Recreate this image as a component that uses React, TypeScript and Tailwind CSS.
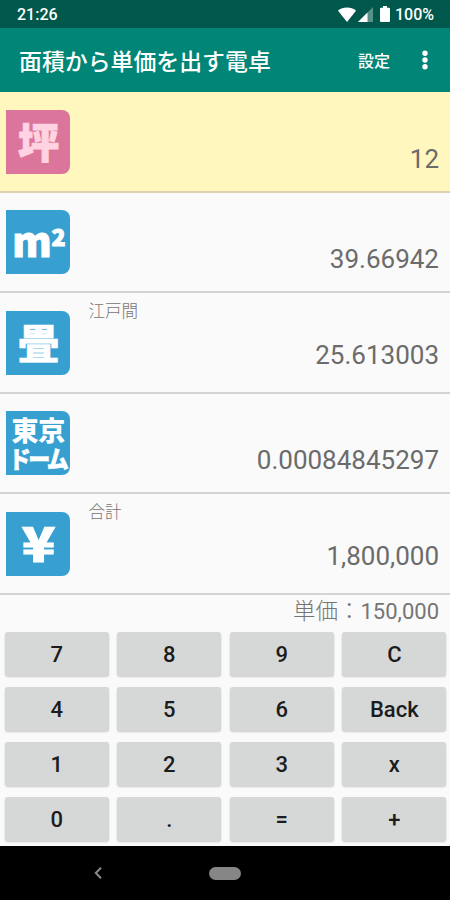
import type { ReactNode } from 'react';
import clsx from 'clsx';

type Row = {
  id: string;
  icon: ReactNode;
  value: string;
  label?: string;
  active?: boolean;
  valueClass: string;
};

const rows: Row[] = [
  {
    id: 'tsubo',
    icon: <span className="pb-[3px] text-[41px] leading-[60px] [-webkit-text-stroke:1px]">坪</span>,
    value: '12',
    active: true,
    valueClass: 'pt-[52px]',
  },
  {
    id: 'm2',
    icon: (
      <span className="flex items-start pb-[5px] pl-[1px] [-webkit-text-stroke:1px]">
        <span className="text-[40px] leading-[58px]">m</span>
        <span className="text-[23px] leading-[50px]">2</span>
      </span>
    ),
    value: '39.66942',
    valueClass: 'pt-[51px]',
  },
  {
    id: 'jo',
    icon: <span className="pb-[3px] text-[41px] leading-[60px] [-webkit-text-stroke:0.5px]">畳</span>,
    value: '25.613003',
    label: '江戸間',
    valueClass: 'pt-[47px]',
  },
  {
    id: 'dome',
    icon: (
      <span className="flex flex-col items-center leading-[27px] whitespace-nowrap">
        <span className="pb-px text-[27px]">東京</span>
        <span className="scale-x-92 text-[24px] tracking-[-1.5px] [font-feature-settings:'palt'] [-webkit-text-stroke:0.5px]">
          ドーム
        </span>
      </span>
    ),
    value: '0.00084845297',
    valueClass: 'pt-[51px]',
  },
  {
    id: 'yen',
    icon: <span className="scale-x-115 pb-[5px] text-[48px] leading-[60px] [-webkit-text-stroke:1px]">¥</span>,
    value: '1,800,000',
    label: '合計',
    valueClass: 'pt-[47px]',
  },
];

const keys = ['7', '8', '9', 'C', '4', '5', '6', 'Back', '1', '2', '3', 'x', '0', '.', '=', '+'];

const StatusBar = () => (
  <div className="flex h-7 items-center bg-[#00574b] pr-4 pl-[17px] text-base font-medium text-white">
    <span className="flex-1 pt-[2px]">21:26</span>
    <svg className="h-[15px] w-[18px]" viewBox="0 0 18 15" fill="currentColor">
      <path d="M0 3.7C2.4 1.8 5.4.6 9 .6s6.600 1.200 9 3.100L9 15z" />
    </svg>
    <svg className="ml-[2px] h-[15px] w-[15px]" viewBox="0 0 15 15" fill="currentColor">
      <path d="M0 15 15 0v15z" opacity=".35" />
      <path d="M0 15 9.500 5.500V15z" />
    </svg>
    <svg className="ml-[7px] h-[16px] w-[10px]" viewBox="0 0 10 16" fill="currentColor">
      <path d="M3 0h4v1.700h2q1 0 1 1V15q0 1-1 1H1q-1 0-1-1V2.700q0-1 1-1h2z" />
    </svg>
    <span className="pt-[2px] pl-[5px]">100%</span>
  </div>
);

const AppBar = () => (
  <div className="flex h-16 items-center bg-[#008577] font-['Noto_Sans_CJK_JP',sans-serif] font-medium text-white">
    <h1 className="flex-1 pt-px pl-[19px] text-[22.9px] whitespace-nowrap">面積から単価を出す電卓</h1>
    <span className="text-base">設定</span>
    <svg className="mr-[22px] ml-8 h-5 w-[6px]" viewBox="0 0 6 20" fill="currentColor">
      <circle cx="3" cy="3.300" r="2.700" />
      <circle cx="3" cy="10" r="2.700" />
      <circle cx="3" cy="16.700" r="2.700" />
    </svg>
  </div>
);

const UnitRow = ({ row }: { row: Row }) => (
  <div
    className={clsx(
      'flex h-[100.6px] border-b-2',
      row.active ? 'border-[#d9d3b4] bg-[#fff7bd]' : 'border-[#d3d3d3]',
    )}
  >
    <div
      className={clsx(
        "mt-[17.6px] ml-[6.4px] flex h-16 w-16 items-center justify-center rounded-r-[8px] font-['Noto_Sans_CJK_JP',sans-serif] font-black",
        row.active ? 'bg-[#dc759b] text-[#ffd3e2]' : 'bg-[#37a0d0] text-white',
      )}
    >
      {row.icon}
    </div>
    <div className="w-20 pt-[7px] pl-[18px] text-[16.5px] leading-6 font-light text-[#757575]">{row.label}</div>
    <div className={clsx('flex-1 pr-[11px] text-right text-[26px] leading-[30px] text-[#6b6b6b]', row.valueClass)}>
      {row.value}
    </div>
  </div>
);

export default function App() {
  return (
    <div className="flex h-[900px] w-[450px] flex-col overflow-hidden bg-[#fafafa] font-['Roboto','Noto_Sans_CJK_JP',sans-serif]">
      <StatusBar />
      <AppBar />

      <div>
        {rows.map((row) => (
          <UnitRow key={row.id} row={row} />
        ))}
      </div>

      {/* Unit price */}
      <div className="h-[37px] pr-[11px] text-right text-[22px] leading-[33px] text-[#757575]">
        <span className="text-[22.5px] font-light">単価：</span>150,000
      </div>

      {/* Keypad */}
      <div className="grid grid-cols-4 gap-x-[8.4px] gap-y-[11.2px] pr-[3.6px] pl-[4.6px]">
        {keys.map((key) => (
          <button
            key={key}
            className="h-[43.8px] rounded-[3px] bg-[#d6d8d7] pt-[2px] text-[22px] font-medium text-[#1c1c1c] shadow-[0_1px_2px_rgba(0,0,0,0.2)]"
          >
            {key}
          </button>
        ))}
      </div>

      {/* Navigation bar */}
      <div className="mt-auto flex h-[54px] items-center bg-black">
        <svg className="ml-[94px] h-3 w-2" viewBox="0 0 8 12" fill="none" stroke="#8a8a8a" strokeWidth="2">
          <path d="M7 .8 1.800 6 7 11.200" />
        </svg>
        <div className="ml-[107px] h-[13px] w-8 rounded-full bg-[#868686]" />
      </div>
    </div>
  );
}
